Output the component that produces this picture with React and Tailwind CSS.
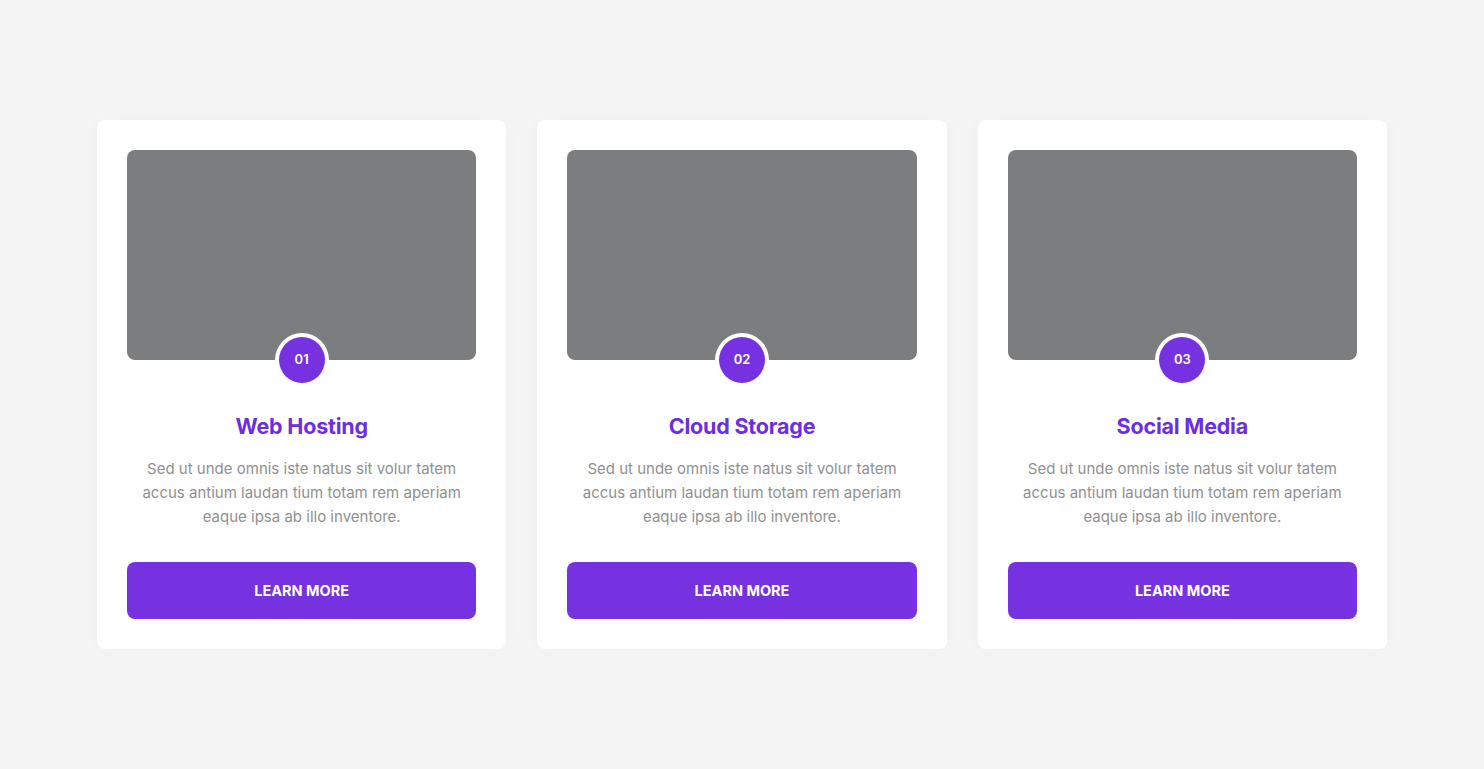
import React from 'react';

const services = [
  { num: '01', title: 'Web Hosting' },
  { num: '02', title: 'Cloud Storage' },
  { num: '03', title: 'Social Media' },
];

const ServiceCard = ({ num, title }) => (
  <div className="bg-white rounded-lg p-[30px] flex flex-col items-center shadow-[0_0_20px_rgba(0,0,0,0.02)]">
    <div className="w-full h-[210px] bg-[#7c7d7f] rounded-lg" />
    <div className="-mt-[27px] w-[54px] h-[54px] rounded-full bg-white flex items-center justify-center">
      <div className="w-[46px] h-[46px] rounded-full bg-[#7631e1] flex items-center justify-center text-white text-[13px] font-semibold">
        {num}
      </div>
    </div>
    <h3 className="mt-[23px] text-[21.5px] leading-[32px] font-bold text-[#6b2ee0] tracking-[-0.2px]">{title}</h3>
    <p className="mt-[15px] text-center text-[15px] leading-[24px] text-[#909090]">
      Sed ut unde omnis iste natus sit volur tatem accus antium laudan tium totam rem aperiam eaque ipsa ab illo inventore.
    </p>
    <button className="mt-[33px] w-full h-[57px] rounded-lg bg-[#7631e1] text-white text-[14.5px] font-bold uppercase">
      Learn More
    </button>
  </div>
);

export default function App() {
  return (
    <div className="min-h-[769px] bg-[#f4f4f4] pt-[120px] font-['Inter',sans-serif]">
      <div className="w-[1290px] mx-auto grid grid-cols-3 gap-[31px]">
        {services.map(s => (
          <ServiceCard key={s.num} {...s} />
        ))}
      </div>
    </div>
  );
}
